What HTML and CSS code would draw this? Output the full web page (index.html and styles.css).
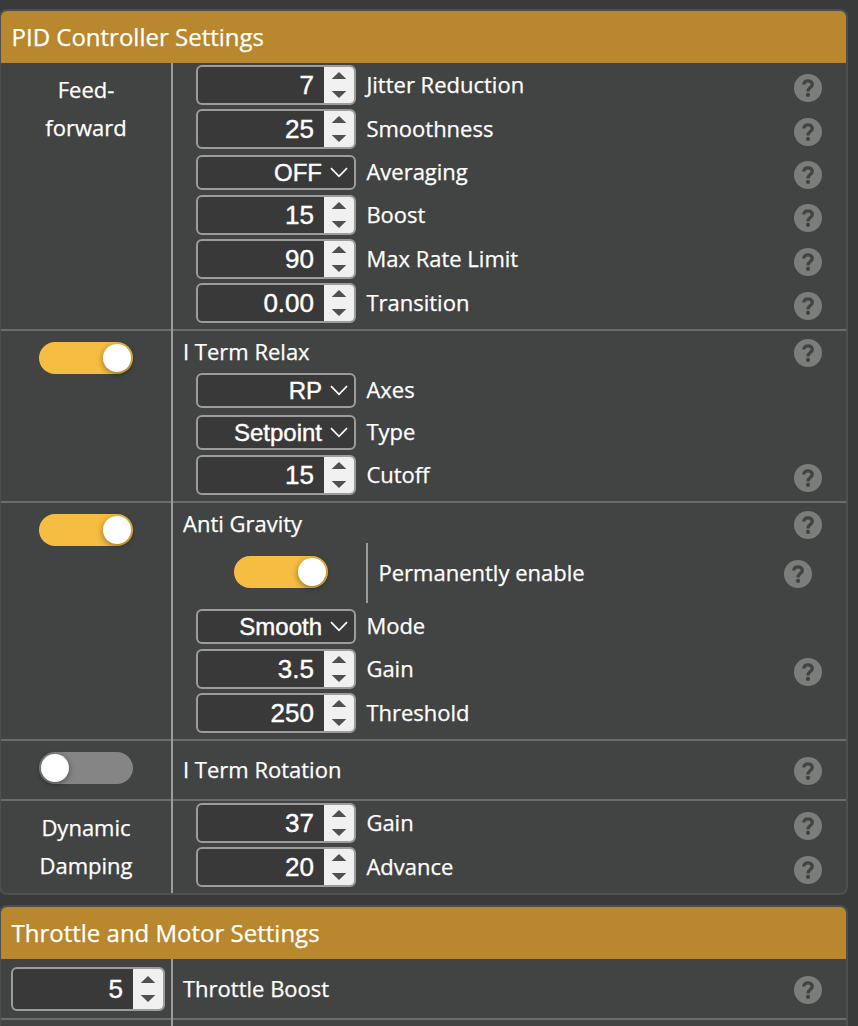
FILE: index.html
```
<!DOCTYPE html>
<html lang="en">
<head>
<meta charset="utf-8">
<title>PID Controller Settings</title>
<link rel="stylesheet" href="styles.css">
</head>
<body>
<svg class="defs" width="0" height="0">
  <symbol id="help" viewBox="0 0 28 28">
    <circle cx="14" cy="14" r="14" fill="#7b7d7b"/>
    <path d="M9.8 10.4C9.8 8 11.6 6.8 14 6.8S18.3 8.2 18.3 10.4C18.3 13.2 14 13.4 14 17.4" fill="none" stroke="#424443" stroke-width="3.3"/>
    <circle cx="14" cy="20.9" r="2.1" fill="#424443"/>
  </symbol>
  <symbol id="spin" viewBox="0 0 30 26">
    <path d="M15 0L22.3 7H7.7ZM15 26L22.3 19H7.7Z" fill="#505050"/>
  </symbol>
  <symbol id="chev" viewBox="0 0 18 11">
    <path d="M1 1.2L9 9.4L17 1.2" fill="none" stroke="#fff" stroke-width="1.7"/>
  </symbol>
</svg>

<main class="page">
  <section class="panel">
    <h2 class="panel-title">PID Controller Settings</h2>

    <div class="group">
      <div class="side"><span class="side-label">Feed-<br>forward</span></div>
      <div class="divider"></div>
      <div class="content">
        <div class="field"><div class="number"><span>7</span><svg><use href="#spin"/></svg></div><label>Jitter Reduction</label><svg class="help"><use href="#help"/></svg></div>
        <div class="field"><div class="number"><span>25</span><svg><use href="#spin"/></svg></div><label>Smoothness</label><svg class="help"><use href="#help"/></svg></div>
        <div class="field field-select"><div class="select"><span>OFF</span><svg><use href="#chev"/></svg></div><label>Averaging</label><svg class="help"><use href="#help"/></svg></div>
        <div class="field"><div class="number"><span>15</span><svg><use href="#spin"/></svg></div><label>Boost</label><svg class="help"><use href="#help"/></svg></div>
        <div class="field"><div class="number"><span>90</span><svg><use href="#spin"/></svg></div><label>Max Rate Limit</label><svg class="help"><use href="#help"/></svg></div>
        <div class="field"><div class="number"><span>0.00</span><svg><use href="#spin"/></svg></div><label>Transition</label><svg class="help"><use href="#help"/></svg></div>
      </div>
    </div>

    <div class="group">
      <div class="side"><div class="toggle on"><i></i></div></div>
      <div class="divider"></div>
      <div class="content">
        <div class="heading"><label>I Term Relax</label><svg class="help"><use href="#help"/></svg></div>
        <div class="field field-select"><div class="select"><span>RP</span><svg><use href="#chev"/></svg></div><label>Axes</label></div>
        <div class="field field-select"><div class="select"><span>Setpoint</span><svg><use href="#chev"/></svg></div><label>Type</label></div>
        <div class="field"><div class="number"><span>15</span><svg><use href="#spin"/></svg></div><label>Cutoff</label><svg class="help"><use href="#help"/></svg></div>
      </div>
    </div>

    <div class="group">
      <div class="side"><div class="toggle on"><i></i></div></div>
      <div class="divider"></div>
      <div class="content">
        <div class="heading"><label>Anti Gravity</label><svg class="help"><use href="#help"/></svg></div>
        <div class="nested">
          <div class="nested-toggle"><div class="toggle on"><i></i></div></div>
          <div class="nested-text"><label>Permanently enable</label><svg class="help"><use href="#help"/></svg></div>
        </div>
        <div class="field field-select"><div class="select"><span>Smooth</span><svg><use href="#chev"/></svg></div><label>Mode</label></div>
        <div class="field"><div class="number"><span>3.5</span><svg><use href="#spin"/></svg></div><label>Gain</label><svg class="help"><use href="#help"/></svg></div>
        <div class="field"><div class="number"><span>250</span><svg><use href="#spin"/></svg></div><label>Threshold</label></div>
      </div>
    </div>

    <div class="group">
      <div class="side"><div class="toggle"><i></i></div></div>
      <div class="divider"></div>
      <div class="content single rotation"><label>I Term Rotation</label><svg class="help"><use href="#help"/></svg></div>
    </div>

    <div class="group last">
      <div class="side"><span class="side-label">Dynamic<br>Damping</span></div>
      <div class="divider"></div>
      <div class="content">
        <div class="field"><div class="number"><span>37</span><svg><use href="#spin"/></svg></div><label>Gain</label><svg class="help"><use href="#help"/></svg></div>
        <div class="field"><div class="number"><span>20</span><svg><use href="#spin"/></svg></div><label>Advance</label><svg class="help"><use href="#help"/></svg></div>
      </div>
    </div>
  </section>

  <section class="panel">
    <h2 class="panel-title">Throttle and Motor Settings</h2>
    <div class="group">
      <div class="side side-input"><div class="number wide"><span>5</span><svg><use href="#spin"/></svg></div></div>
      <div class="divider"></div>
      <div class="content single throttle"><label>Throttle Boost</label><svg class="help"><use href="#help"/></svg></div>
    </div>
    <div class="group last">
      <div class="side"></div>
      <div class="divider"></div>
      <div class="content single"></div>
    </div>
  </section>
</main>
</body>
</html>
```
FILE: styles.css
```
* { box-sizing: border-box; }

body {
  margin: 0;
  height: 1026px;
  overflow: hidden;
  background: #393b3a;
  color: #fff;
  font-family: "Open Sans", sans-serif;
  font-size: 22px;
  -webkit-text-stroke: .25px #fff;
}

.defs { display: block; height: 0; }

.page {
  display: flex;
  flex-direction: column;
  gap: 10px;
  padding-top: 9px;
}

.panel {
  width: 849px;
  margin-left: -1px;
  border: 2px solid #4e4f4e;
  border-radius: 8px;
  background: #424443;
  overflow: hidden;
}

.panel-title {
  margin: 0;
  height: 52px;
  padding-left: 10.5px;
  background: #b8872e;
  font-size: 24px;
  font-weight: 400;
  line-height: 52px;
}

.group {
  display: grid;
  grid-template-columns: 170px 2px 1fr;
}

.side,
.content { border-bottom: 2px solid #6b6c6b; }

.last .side,
.last .content { border-bottom: 0; }

.divider { background: #9c9c9c; }

.side {
  display: flex;
  justify-content: center;
  align-items: flex-start;
  padding-top: 11px;
}

.side-label {
  margin-top: -4px;
  line-height: 38px;
  text-align: center;
}

.side-input { padding-top: 8px; justify-content: flex-start; padding-left: 10px; }

.content { padding-bottom: 4px; }

label {
  padding-bottom: 2px;
  line-height: 30px;
  white-space: nowrap;
}

.help {
  flex: none;
  width: 28px;
  height: 28px;
  margin: 6px 24px 0 auto;
}

.field {
  display: flex;
  align-items: center;
  height: 44px;
  padding-left: 23px;
}

.field label { margin-left: 10.4px; }

.field-select { height: 42px; }

.field-select .select { margin-top: 1px; }

.number,
.select {
  display: flex;
  flex: none;
  align-items: center;
  justify-content: flex-end;
  width: 160px;
  border: 2px solid #9c9c9c;
  border-radius: 6px;
  background: #393939;
  font-family: "Liberation Sans", Arial, sans-serif;
  -webkit-text-stroke-width: .4px;
  overflow: hidden;
}

.number { height: 40px; font-size: 26px; }

.number span { margin-right: 10px; }

.number svg {
  width: 30px;
  height: 100%;
  padding: 5px 0;
  background: #f0f0f0;
}

.wide { width: 154px; height: 44px; }

.wide svg { padding: 7px 0; }

.select { height: 35px; font-size: 24px; }

.select svg {
  width: 18px;
  height: 11px;
  margin: 0 6px 0 8px;
}

.heading {
  display: flex;
  align-items: center;
  height: 38px;
  padding-left: 10px;
}

.heading label { margin-top: 4px; }

.toggle {
  width: 94px;
  height: 32px;
  padding: 2px;
  border-radius: 16px;
  background: #858585;
}

.toggle i {
  display: block;
  width: 28px;
  height: 28px;
  border-radius: 50%;
  background: #fff;
  box-shadow: 0 2px 6px rgba(0, 0, 0, .4);
}

.toggle.on { background: #f5bd41; }

.toggle.on i { margin-left: auto; margin-right: 0; }

.nested {
  display: flex;
  height: 64px;
  padding: 2px 10px 2px 23px;
}

.nested-toggle {
  display: flex;
  justify-content: center;
  width: 172px;
  padding: 13px 0 0 0;
  border-right: 2px solid #9c9c9c;
}

.nested-text {
  display: flex;
  flex: 1;
  align-items: center;
  padding-left: 10.5px;
}

.nested-text .help { margin-top: 2px; }

.single {
  display: flex;
  align-items: center;
  padding: 0 0 0 10px;
}

.rotation { height: 60px; }

.throttle { height: 61px; }

.single .help { margin-top: 2px; }
```
